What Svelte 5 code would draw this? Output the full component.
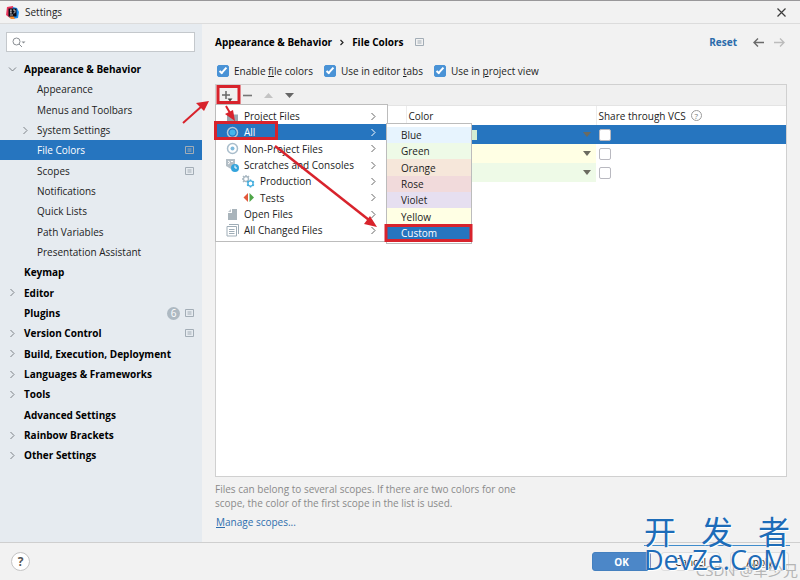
<script lang="ts">
  type TreeItem = { label: string; level: number; arrow?: 'open' | 'closed'; badge?: number; project?: boolean; active?: boolean };

  const tree: TreeItem[] = [
    { label: 'Appearance & Behavior', level: 0, arrow: 'open' },
    { label: 'Appearance', level: 1 },
    { label: 'Menus and Toolbars', level: 1 },
    { label: 'System Settings', level: 1, arrow: 'closed' },
    { label: 'File Colors', level: 1, project: true, active: true },
    { label: 'Scopes', level: 1, project: true },
    { label: 'Notifications', level: 1 },
    { label: 'Quick Lists', level: 1 },
    { label: 'Path Variables', level: 1 },
    { label: 'Presentation Assistant', level: 1 },
    { label: 'Keymap', level: 0 },
    { label: 'Editor', level: 0, arrow: 'closed' },
    { label: 'Plugins', level: 0, badge: 6, project: true },
    { label: 'Version Control', level: 0, arrow: 'closed', project: true },
    { label: 'Build, Execution, Deployment', level: 0, arrow: 'closed' },
    { label: 'Languages & Frameworks', level: 0, arrow: 'closed' },
    { label: 'Tools', level: 0, arrow: 'closed' },
    { label: 'Advanced Settings', level: 0 },
    { label: 'Rainbow Brackets', level: 0, arrow: 'closed' },
    { label: 'Other Settings', level: 0, arrow: 'closed' },
  ];

  const scopes = [
    { label: 'Project Files', icon: 'folder' },
    { label: 'All', icon: 'target' },
    { label: 'Non-Project Files', icon: 'target' },
    { label: 'Scratches and Consoles', icon: 'scratch' },
    { label: 'Production', icon: 'gears', indent: true },
    { label: 'Tests', icon: 'tests', indent: true },
    { label: 'Open Files', icon: 'file' },
    { label: 'All Changed Files', icon: 'changes' },
  ];

  const colors = ['Blue', 'Green', 'Orange', 'Rose', 'Violet', 'Yellow', 'Custom'];

  let rows = $state([
    { color: 'Custom', shared: false, selected: true },
    { color: 'Yellow', shared: false, selected: false },
    { color: 'Green', shared: false, selected: false },
  ]);
  let query = $state('');
  let enabled = $state(true);
  let inTabs = $state(true);
  let inProject = $state(true);
</script>

{#snippet projectIcon()}
  <svg class="project-icon" width="9" height="8" viewBox="0 0 9 8" fill="none" stroke="currentColor">
    <path d="M.5.5h8v7h-8z" />
    <path d="M2.500 3h4M2.500 5h4" />
  </svg>
{/snippet}

{#snippet chevron()}
  <svg class="chevron" width="7" height="9" viewBox="0 0 7 9" fill="none" stroke="currentColor"><path d="M1.500 1l3.500 3.500L1.500 8" /></svg>
{/snippet}

<div class="window">
  <header class="titlebar">
    <svg width="13" height="13" viewBox="0 0 13 13">
      <path d="M1 1l6-1 1 6-4 6-4-3z" fill="#e8365d" />
      <path d="M7 1l4 1 2 4-1 6-6 1-3-2z" fill="#1c8cf0" />
      <path d="M3 11l4-2 2 4-4 0z" fill="#f68a2d" />
      <path d="M2.500 2.500h8v8h-8z" fill="#0b0b14" />
      <path d="M4 4h1.800M4.900 4v3M4 7h1.800M7 4h2v2.300q0 .7-1.500.7M4 9h3" stroke="#fff" stroke-width=".7" fill="none" />
    </svg>
    <span>Settings</span>
    <button class="close" aria-label="Close">
      <svg width="9" height="9" viewBox="0 0 9 9" stroke="#3c3c3c" stroke-width="1.200"><path d="M.5.5l8 8M8.500.5l-8 8" /></svg>
    </button>
  </header>

  <div class="body">
    <aside>
      <label class="search">
        <svg width="15" height="11" viewBox="0 0 15 11" fill="none" stroke="#8b8f94">
          <circle cx="4.500" cy="4.500" r="3.500" /><path d="M7 7l3 3" />
          <path d="M9.500 4.500h4l-2 2z" fill="#8b8f94" stroke="none" />
        </svg>
        <input type="text" aria-label="Search settings" bind:value={query} />
      </label>
      <nav>
        {#each tree as item (item.label)}
          <a href="#settings" class="node" class:child={item.level === 1} class:active={item.active}>
            <span class="toggle" class:open={item.arrow === 'open'}>{#if item.arrow}{@render chevron()}{/if}</span>
            <span class="name">{item.label}</span>
            {#if item.badge}<span class="badge">{item.badge}</span>{/if}
            {#if item.project}{@render projectIcon()}{/if}
          </a>
        {/each}
      </nav>
    </aside>

    <main>
      <div class="crumbs">
        <strong>Appearance &amp; Behavior</strong>
        <svg width="4" height="7" viewBox="0 0 4 7" fill="none" stroke="#222" stroke-width="1.200"><path d="M.5 1L3 3.500.5 6" /></svg>
        <strong>File Colors</strong>
        <span class="shared-mark">{@render projectIcon()}</span>
        <button class="reset">Reset</button>
        <button class="nav-btn" aria-label="Back">
          <svg width="12" height="9" viewBox="0 0 12 9" fill="none" stroke="#6a6a6a" stroke-width="1.400"><path d="M11 4.500H1M5 .5l-4 4 4 4" /></svg>
        </button>
        <button class="nav-btn" aria-label="Forward" disabled>
          <svg width="12" height="9" viewBox="0 0 12 9" fill="none" stroke="#bcbcbc" stroke-width="1.400"><path d="M0 4.500h10M6 .5l4 4-4 4" /></svg>
        </button>
      </div>

      <div class="options">
        <label><input type="checkbox" bind:checked={enabled} /><span>Enable <u>f</u>ile colors</span></label>
        <label><input type="checkbox" bind:checked={inTabs} /><span>Use in editor <u>t</u>abs</span></label>
        <label><input type="checkbox" bind:checked={inProject} /><span>Use in <u>p</u>roject view</span></label>
      </div>

      <section class="panel">
        <div class="toolbar">
          <button aria-label="Add">
            <svg width="13" height="13" viewBox="0 0 13 13"><path d="M6 2v8M2 6h8" stroke="#666" stroke-width="1.500" /><path d="M7.500 9.500h5l-2.500 3z" fill="#444" /></svg>
          </button>
          <button aria-label="Remove">
            <svg width="13" height="13" viewBox="0 0 13 13"><path d="M2 6.500h9" stroke="#777" stroke-width="1.600" /></svg>
          </button>
          <button aria-label="Move up" disabled>
            <svg width="13" height="13" viewBox="0 0 13 13"><path d="M2 9h9L6.500 4z" fill="#c3c3c3" /></svg>
          </button>
          <button aria-label="Move down">
            <svg width="13" height="13" viewBox="0 0 13 13"><path d="M2 4h9L6.500 9z" fill="#666" /></svg>
          </button>
        </div>

        <table>
          <thead>
            <tr>
              <td></td>
              <th>Color</th>
              <th><span class="share">Share through VCS <span class="hint">?</span></span></th>
            </tr>
          </thead>
          <tbody>
            {#each rows as row, i}
              <tr class:selected={row.selected}>
                <td></td>
                <td class="color {row.color.toLowerCase()}">
                  <div class="cell">
                    <select aria-label="Color" bind:value={row.color}>
                      {#each colors as c}<option>{c}</option>{/each}
                    </select>
                    {#if row.selected}<i class="swatch"></i>{/if}
                    <svg width="8" height="5" viewBox="0 0 8 5"><path d="M0 0h8L4 5z" fill="#6b6b60" /></svg>
                  </div>
                </td>
                <td><input type="checkbox" aria-label="Share row {i + 1}" bind:checked={row.shared} /></td>
              </tr>
            {/each}
          </tbody>
        </table>

        <div class="menu scope-menu" role="menu">
          {#each scopes as s (s.label)}
            <button role="menuitem" class:indent={s.indent} class:active={s.label === 'All'}>
              <svg width="13" height="13" viewBox="0 0 13 13" fill="none">
                {#if s.icon === 'folder'}
                  <path d="M1 3h4l1 1.500h6V11H1z" fill="#9aa7b0" />
                {:else if s.icon === 'target'}
                  <circle cx="6.500" cy="6.500" r="5" stroke={s.label === 'All' ? '#b4c8da' : '#a9bdcb'} stroke-width="1.500" />
                  <circle cx="6.500" cy="6.500" r={s.label === 'All' ? 3 : 2} fill={s.label === 'All' ? '#45b5ec' : '#7fb9dc'} />
                {:else if s.icon === 'scratch'}
                  <path d="M0 0h9v5L5 10 0 7z" fill="#b3bec6" />
                  <path d="M2 2l2 1.500L2 5M5 2.500h2" stroke="#fff" />
                  <circle cx="9" cy="9" r="4" fill="#35a4dc" />
                  <path d="M9 6.500V9h2" stroke="#fff" />
                {:else if s.icon === 'gears'}
                  <circle cx="4" cy="4" r="2.500" stroke="#a9b8c2" stroke-width="1.400" />
                  <path d="M4 0v1.500M0 4h1.500M1 1l1 1M7 1L6 2M1 7l1-1" stroke="#a9b8c2" stroke-width="1.400" />
                  <circle cx="8.500" cy="8.500" r="2.600" stroke="#45aede" stroke-width="1.400" />
                  <path d="M8.500 4.500V6M8.500 11v1.500M5 6.500l1.300.7M12 6.500l-1.300.7M5 10.500l1.300-.7M12 10.500l-1.300-.7" stroke="#45aede" stroke-width="1.500" />
                {:else if s.icon === 'tests'}
                  <path d="M6 2v9L1.500 6.500z" fill="#e3593c" /><path d="M7.500 2v9L12 6.500z" fill="#4fa548" />
                {:else if s.icon === 'file'}
                  <path d="M6 1h5v11H2V5h4z" fill="#a9b4bb" /><path d="M5 1v3H2z" fill="#bcc5cb" />
                {:else}
                  <path d="M3 .5h9.500V10M1 2.500h9.500V12H1z" stroke="#9fadb7" /><path d="M3 5.500h5.500M3 7.500h5.500M3 9.500h5.500" stroke="#9fadb7" />
                {/if}
              </svg>
              <span>{s.label}</span>
              {@render chevron()}
            </button>
          {/each}
        </div>

        <div class="menu color-menu" role="menu">
          {#each colors as c}
            <button role="menuitem" class={c.toLowerCase()} class:active={c === 'Custom'}>{c}</button>
          {/each}
        </div>
      </section>

      <p>Files can belong to several scopes. If there are two colors for one scope, the color of the first scope in the list is used.</p>
      <a class="manage" href="#scopes"><u>M</u>anage scopes...</a>
    </main>
  </div>

  <footer>
    <button class="help" aria-label="Help">?</button>
    <button class="btn primary">OK</button>
    <button class="btn">Cancel</button>
    <button class="btn">Apply</button>
  </footer>

  <svg class="marks" width="480" height="250" viewBox="0 0 480 250" fill="none" stroke="#d8232c">
    <g stroke-width="3">
      <path d="M218 87.500h21v16h-21zM215.500 123.500h61v16h-61zM386 226.500h85v15h-85z" />
    </g>
    <g stroke-width="2">
      <path d="M183 124l19-17M226 107l4 7" />
      <path d="M275 147l94 74" stroke-width="2.500" />
    </g>
    <g fill="#d8232c" stroke="none">
      <path d="M209 102l-5 10-8-8zM235 122l-10-7 8-4zM377 228l-13-3 6-8z" />
    </g>
  </svg>

  <div class="author">CSDN @军少兄</div>
  <div class="stamp">
    <div class="stamp-cn"><span>开</span><span>发</span><span>者</span></div>
    <div class="stamp-en">DevZe.CoM</div>
  </div>
</div>

<style>
  :global(body) { margin: 0; background: #f2f2f2; }
  .window { position: relative; min-height: 100vh; box-sizing: border-box; display: flex; flex-direction: column; overflow: hidden; border-top: 1px solid #99989a; background: #f2f2f2; color: #1c1c1c; font: 10px/16px "Open Sans", "Noto Sans CJK SC", sans-serif; }
  button, input, select { font: inherit; color: inherit; margin: 0; padding: 0; border: 0; background: none; }
  button { cursor: pointer; }
  a { color: inherit; text-decoration: none; }
  svg { flex: none; display: block; }

  .titlebar { display: flex; align-items: center; gap: 6px; height: 22px; padding: 0 14px 0 6px; border-bottom: 1px solid #dcdcdc; }
  .close { margin-left: auto; }

  .body { flex: 1; display: flex; }
  aside { flex: 0 0 202px; box-sizing: border-box; padding-top: 8px; background: #e6ebf0; }
  .search { display: flex; align-items: center; gap: 4px; height: 18px; margin: 0 7px 7px 6px; padding-left: 5px; border: 1px solid #c4c8cc; background: #fff; }
  .search input { flex: 1; min-width: 0; outline: none; }
  .node { display: flex; align-items: center; height: 20px; padding: 0 8px 0 9px; font-weight: 700; color: #000; }
  .node:nth-child(3n) { height: 21px; }
  .node.child { padding-left: 22px; font-weight: 400; color: #222; }
  .node.active { background: #2675bf; color: #fff; }
  .toggle { flex: none; width: 15px; color: #7d8287; font-size: 0; }
  .toggle.open svg { transform: rotate(90deg); }
  .name { flex: 1; white-space: nowrap; }
  .project-icon { color: #a3adb6; }
  .badge { width: 13px; height: 13px; margin-right: 5px; border-radius: 50%; background: #aeb9c2; color: #fff; font-weight: 400; line-height: 13px; text-align: center; }

  main { flex: 1; min-width: 0; display: flex; flex-direction: column; padding: 9px 13px 12px 13px; }
  .crumbs { display: flex; align-items: center; gap: 8px; height: 18px; color: #000; }
  .shared-mark { margin-left: 3px; }
  .reset { margin-left: auto; margin-right: 8px; font-weight: 700; color: #2b6cab; }
  .nav-btn { width: 13px; }
  .options { display: flex; gap: 11px; padding: 12px 0 5px 2px; }
  .options label { display: flex; align-items: center; gap: 5px; }
  input[type='checkbox'] { appearance: none; display: block; box-sizing: border-box; width: 12px; height: 12px; border: 1px solid #b9b9c0; border-radius: 2px; background: #fff; }
  input[type='checkbox']:checked { border-color: #4a93d6; background: #4a93d6; }
  input[type='checkbox']:checked::after { content: ''; display: block; box-sizing: border-box; width: 4px; height: 8px; margin-left: 3px; border: solid #fff; border-width: 0 2px 2px 0; transform: rotate(42deg); }

  .panel { position: relative; flex: 1; border: 1px solid #d0d0d0; background: #fff; }
  .toolbar { display: flex; align-items: center; gap: 8px; height: 20px; padding-left: 4px; background: #f0f0f0; border-bottom: 1px solid #e4e4e4; }
  table { width: 100%; table-layout: fixed; border-collapse: collapse; }
  th, td { height: 19px; padding: 0; text-align: left; font-weight: 400; }
  th { padding-left: 2px; border-left: 1px solid #ececec; }
  tbody td:last-child { padding-left: 3px; }
  .share { display: flex; align-items: center; gap: 5px; }
  .hint { box-sizing: border-box; width: 11px; height: 11px; border: 1px solid #9b9b9b; border-radius: 50%; color: #777; font-size: 8px; line-height: 9px; text-align: center; }
  .cell { position: relative; display: flex; align-items: center; justify-content: flex-end; height: 16px; padding-right: 5px; }
  .cell select { position: absolute; inset: 0; width: 100%; padding-left: 2px; appearance: none; outline: none; }
  .cell svg { pointer-events: none; position: relative; }
  .swatch { position: absolute; left: 0; width: 71px; height: 10px; background: #d3ecd3; }

  .blue { background: #e7f4fe; }
  .green { background: #eefae7; }
  .orange { background: #f6e7da; }
  .rose { background: #f1dadb; }
  .violet { background: #e6dff0; }
  .yellow { background: #ffffe4; }
  .selected td { background: #2675bf; }

  .menu { position: absolute; box-sizing: border-box; display: flex; flex-direction: column; border: 1px solid #bcbcbc; background: #fff; }
  .menu button { display: flex; align-items: center; height: 16px; text-align: left; }
  .menu button:nth-child(3n) { height: 17px; }
  .menu .active { background: #2675bf; color: #fff; }
  .scope-menu { top: 19px; left: -1px; width: 173px; padding: 3px 0; }
  .scope-menu button { gap: 5px; padding: 0 10px; }
  .scope-menu .indent { padding-left: 26px; }
  .scope-menu span { flex: 1; white-space: nowrap; }
  .scope-menu .chevron { color: #666; }
  .scope-menu .active .chevron { color: #fff; }
  .color-menu { top: 38px; left: 170px; width: 86px; padding: 3px 0 2px; }
  .color-menu button { padding-left: 14px; }

  p { width: 320px; margin: 5px 0 4px; color: #8a8a8a; line-height: 14px; }
  .manage { align-self: flex-start; margin-left: 1px; color: #2f6fae; }

  footer { display: flex; align-items: center; gap: 10px; height: 37px; padding: 0 11px; border-top: 1px solid #cfcfcf; }
  .help { width: 19px; height: 19px; margin-right: auto; border: 1px solid #c4c4c4; border-radius: 50%; background: #fff; color: #555; font-size: 12px; font-weight: 700; line-height: 17px; }
  .btn { box-sizing: border-box; width: 59px; height: 19px; border: 1px solid #dedede; border-radius: 3px; background: #f8f8f8; }
  .btn.primary { border-color: #4480bf; background: #4c87c8; color: #fff; font-weight: 700; }

  .marks { position: absolute; top: -2px; left: 0; pointer-events: none; }
  .author { position: absolute; right: 2px; bottom: 1px; color: #b5b5b5; font-size: 15px; line-height: 18px; }
  .stamp { position: absolute; right: 10px; bottom: 7px; width: 146px; color: #1d6cb8; pointer-events: none; text-shadow: 0 0 1px #fff, 1px 1px 0 #fff; }
  .stamp-cn { display: flex; justify-content: space-between; border-bottom: 1px solid #3f8ccc; font: 32px/30px "Noto Sans CJK SC", sans-serif; }
  .stamp-en { font: 27px/27px "Open Sans", sans-serif; }
</style>
